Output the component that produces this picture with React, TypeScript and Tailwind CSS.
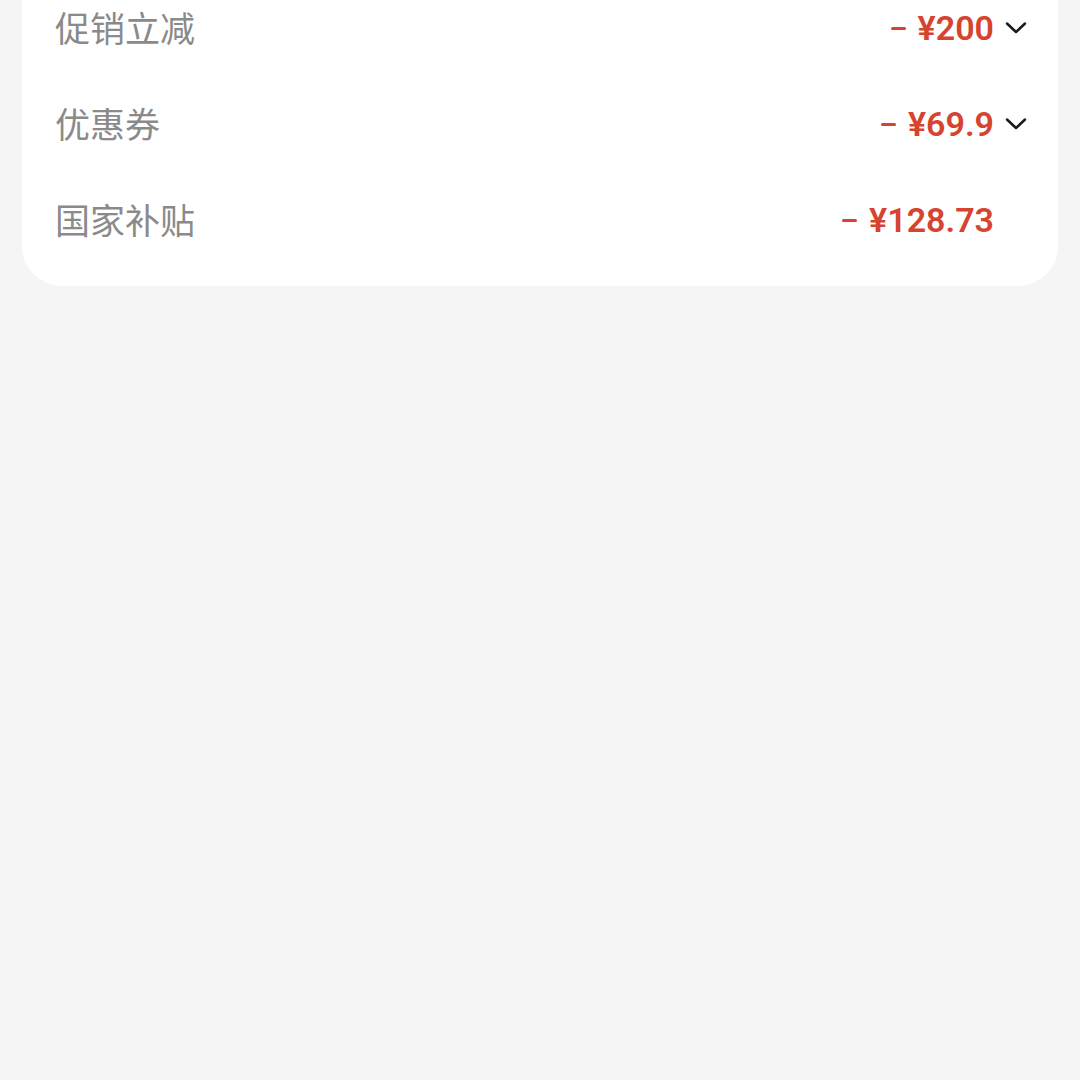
const rows = [
    { label: "促销立减", amount: "¥200", arrow: true },
    { label: "优惠券", amount: "¥69.9", arrow: true },
    { label: "国家补贴", amount: "¥128.73", arrow: false },
]

const Chevron = () => (
    <svg width="24" height="24" viewBox="0 0 24 24" fill="none" stroke="#1a1a1a" strokeWidth="2.5" strokeLinecap="round" strokeLinejoin="round">
        <path d="M3 7.5l9 8.5 9-8.5" />
    </svg>
)

export default function App() {
    return (
        <div className="min-h-[1080px] w-full overflow-hidden bg-[#f5f5f5] font-['Noto_Sans_CJK_SC',sans-serif]">
            <div className="mx-[22px] -mt-[20px] rounded-b-[40px] bg-white pb-[18px] pl-[33px] pr-[30px]">
                {rows.map((row) => (
                    <div key={row.label} className="flex h-[96px] items-center justify-between">
                        <span className="pb-[4px] text-[35px] leading-none text-[#8a8a8a]">{row.label}</span>
                        <div className="flex items-center gap-[10px]">
                            <span className="flex items-center text-[#d6432e]">
                                <span className="mr-[12px] h-[3px] w-[15px] rounded-full bg-[#d6432e]" />
                                <span className="font-['Roboto',sans-serif] text-[34px] font-semibold leading-none">
                                    {row.amount}
                                </span>
                            </span>
                            {row.arrow ? <Chevron /> : <span className="w-[24px]" />}
                        </div>
                    </div>
                ))}
            </div>
        </div>
    )
}
